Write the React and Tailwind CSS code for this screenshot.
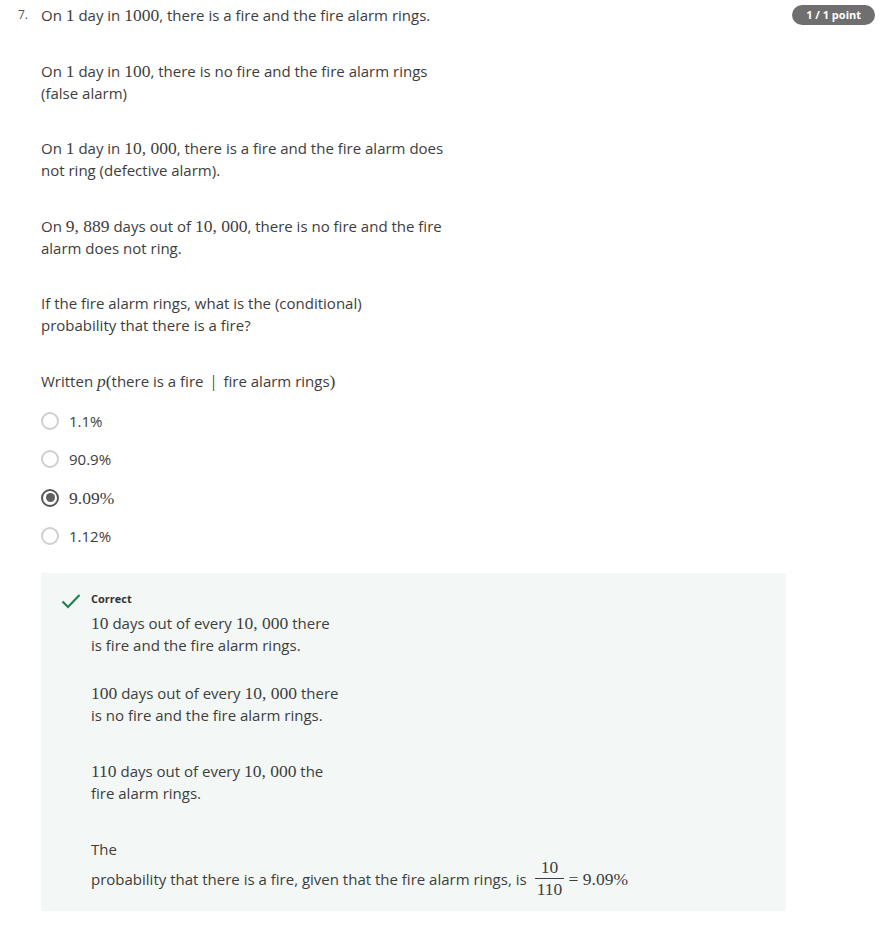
const sans = "font-['Open_Sans',sans-serif]";
const M = ({ children }) => (
  <span className="font-['Liberation_Serif',serif] text-[17.5px]">{children}</span>
);

const options = [
  { label: "1.1%" },
  { label: "90.9%" },
  { label: <M>9.09%</M>, checked: true },
  { label: "1.12%" },
];

function Radio({ checked }) {
  return checked ? (
    <span className="grid size-[18px] place-items-center rounded-full border-2 border-[#575757]">
      <span className="size-[9px] rounded-full bg-[#5e5e5e]" />
    </span>
  ) : (
    <span className="size-[18px] rounded-full border-2 border-[#cfcfcf] bg-white" />
  );
}

export default function App() {
  return (
    <div className={`${sans} relative min-h-[925px] w-[896px] bg-white text-[15px] leading-[22px] text-[#3d3d3d]`}>
      <span className="absolute right-[21px] top-[5px] rounded-full bg-[#6f6f6f] px-[14px] text-[11px] font-bold leading-[20px] text-white">
        1 / 1 point
      </span>

      <div className="flex pt-[4px]">
        <div className="w-[41px] pl-[18px] pt-[1px] text-[12px] leading-[20px] text-[#555]">7.</div>
        <div className="flex flex-col">
          <div className="flex flex-col gap-[33.5px]">
            <p>On <M>1</M> day in <M>1000</M>, there is a fire and the fire alarm rings.</p>
            <p>On <M>1</M> day in <M>100</M>, there is no fire and the fire alarm rings<br />(false alarm)</p>
            <p>On <M>1</M> day in <M>10, 000</M>, there is a fire and the fire alarm does<br />not ring (defective alarm).</p>
            <p>On <M>9, 889</M> days out of <M>10, 000</M>, there is no fire and the fire<br />alarm does not ring.</p>
            <p>If the fire alarm rings, what is the (conditional)<br />probability that there is a fire?</p>
            <p>
              Written <M><i>p</i>(</M>there is a fire <M>&nbsp;|&nbsp;</M> fire alarm rings<M>)</M>
            </p>
          </div>

          <div className="mt-[18.5px] flex flex-col gap-[16.3px]">
            {options.map((o, i) => (
              <label key={i} className="flex h-[22px] items-center gap-[10px]">
                <Radio checked={o.checked} />
                <span>{o.label}</span>
              </label>
            ))}
          </div>

          <div className="mt-[26.5px] flex w-[745px] gap-[10px] bg-[#f3f8f6] pb-[11px] pl-[20px] pt-[19px]">
            <svg width="20" height="16" viewBox="0 0 20 16" className="mt-[1px] shrink-0">
              <path d="M1.5 8.5 L7 14 L18.5 2" fill="none" stroke="#1f8354" strokeWidth="2.2" />
            </svg>
            <div className="flex flex-col">
              <span className="text-[11px] font-bold leading-[14px] text-[#333]">Correct</span>
              <p className="mt-[6px]"><M>10</M> days out of every <M>10, 000</M> there<br />is fire and the fire alarm rings.</p>
              <p className="mt-[26px]"><M>100</M> days out of every <M>10, 000</M> there<br />is no fire and the fire alarm rings.</p>
              <p className="mt-[34px]"><M>110</M> days out of every <M>10, 000</M> the<br />fire alarm rings.</p>
              <p className="mt-[34px]">The</p>
              <p className="-mt-[3px] flex items-center">
                <span>probability that there is a fire, given that the fire alarm rings, is</span>
                <span className="ml-[8px] inline-flex flex-col items-center font-['Liberation_Serif',serif] text-[17.5px] leading-[21px]">
                  <span className="px-[2px]">10</span>
                  <span className="w-full border-t border-[#3d3d3d]" />
                  <span className="px-[2px]">110</span>
                </span>
                <M>&nbsp;=&nbsp;9.09%</M>
              </p>
            </div>
          </div>
        </div>
      </div>
    </div>
  );
}
